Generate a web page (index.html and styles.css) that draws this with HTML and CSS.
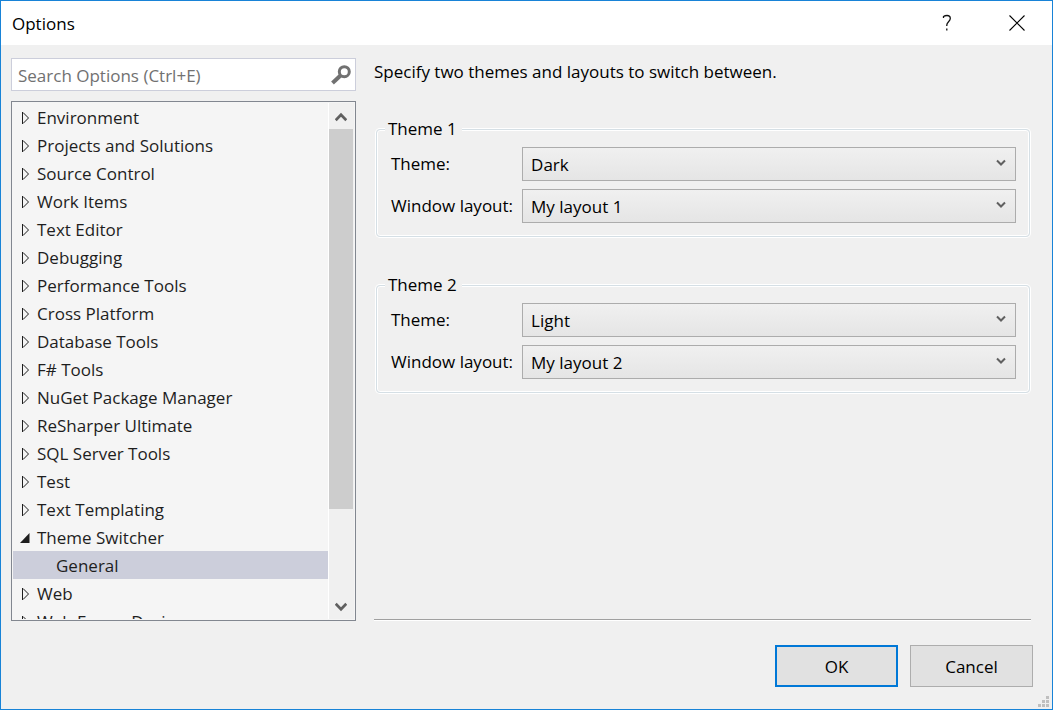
FILE: index.html
```html
<!DOCTYPE html>
<html lang="en">
<head>
<meta charset="utf-8">
<title>Options</title>
<link rel="stylesheet" href="styles.css">
</head>
<body>
<svg class="defs" aria-hidden="true">
  <symbol id="closed" viewBox="0 0 12 14"><path d="M2.5 1v12M3 1.5l5.5 5.5L3 12.500" fill="none" stroke="#1e1e1e"/></symbol>
  <symbol id="open" viewBox="0 0 12 14"><path d="M9.500 2v10H0z" fill="#1e1e1e"/></symbol>
  <symbol id="chevron" viewBox="0 0 10 8"><path d="M1 1.500l4 4 4-4" fill="none" stroke="#606060" stroke-width="2"/></symbol>
</svg>
<div class="dialog" role="dialog" aria-labelledby="title">
  <header class="titlebar">
    <h1 class="title" id="title">Options</h1>
    <button class="caption-button" type="button" aria-label="Help">
      <svg width="10" height="18" viewBox="0 0 10 18"><path d="M1.500 4V2.500Q3 1.500 5 1.500c2 0 3.300 1 3.300 3C8.300 7.500 4.800 8 4.800 11v1M4.800 14.500v2" fill="none" stroke="#111" stroke-width="1.300"/></svg>
    </button>
    <button class="caption-button" type="button" aria-label="Close">
      <svg width="16" height="16" viewBox="0 0 16 16"><path d="M.5.5l15 15M15.500.5l-15 15" fill="none" stroke="#000" stroke-width="1.100"/></svg>
    </button>
  </header>
  <div class="body">
    <nav class="sidebar">
      <div class="search">
        <input class="search-input" type="text" placeholder="Search Options (Ctrl+E)" aria-label="Search Options">
        <button class="search-button" type="button" aria-label="Search">
          <svg width="20" height="20" viewBox="0 0 20 20"><circle cx="13.300" cy="6.700" r="5" fill="none" stroke="#717171" stroke-width="3"/><path d="M9.500 10.500l-8 7.500" stroke="#717171" stroke-width="4"/></svg>
        </button>
      </div>
      <div class="tree">
        <ul class="tree-list">
          <li><button class="node" type="button"><svg class="arrow"><use href="#closed"/></svg>Environment</button></li>
          <li><button class="node" type="button"><svg class="arrow"><use href="#closed"/></svg>Projects and Solutions</button></li>
          <li><button class="node" type="button"><svg class="arrow"><use href="#closed"/></svg>Source Control</button></li>
          <li><button class="node" type="button"><svg class="arrow"><use href="#closed"/></svg>Work Items</button></li>
          <li><button class="node" type="button"><svg class="arrow"><use href="#closed"/></svg>Text Editor</button></li>
          <li><button class="node" type="button"><svg class="arrow"><use href="#closed"/></svg>Debugging</button></li>
          <li><button class="node" type="button"><svg class="arrow"><use href="#closed"/></svg>Performance Tools</button></li>
          <li><button class="node" type="button"><svg class="arrow"><use href="#closed"/></svg>Cross Platform</button></li>
          <li><button class="node" type="button"><svg class="arrow"><use href="#closed"/></svg>Database Tools</button></li>
          <li><button class="node" type="button"><svg class="arrow"><use href="#closed"/></svg>F# Tools</button></li>
          <li><button class="node" type="button"><svg class="arrow"><use href="#closed"/></svg>NuGet Package Manager</button></li>
          <li><button class="node" type="button"><svg class="arrow"><use href="#closed"/></svg>ReSharper Ultimate</button></li>
          <li><button class="node" type="button"><svg class="arrow"><use href="#closed"/></svg>SQL Server Tools</button></li>
          <li><button class="node" type="button"><svg class="arrow"><use href="#closed"/></svg>Test</button></li>
          <li><button class="node" type="button"><svg class="arrow"><use href="#closed"/></svg>Text Templating</button></li>
          <li><button class="node" type="button" aria-expanded="true"><svg class="arrow"><use href="#open"/></svg>Theme Switcher</button>
            <ul class="tree-group">
              <li><button class="node child selected" type="button">General</button></li>
            </ul>
          </li>
          <li><button class="node" type="button"><svg class="arrow"><use href="#closed"/></svg>Web</button></li>
          <li><button class="node" type="button"><svg class="arrow"><use href="#closed"/></svg>Web Forms Designer</button></li>
        </ul>
        <div class="scrollbar">
          <button class="scroll-button" type="button" aria-label="Scroll up"><svg width="12" height="10" viewBox="0 0 12 10"><path d="M.7 8.200L6 2.700l5.300 5.500" fill="none" stroke="#606060" stroke-width="2.700"/></svg></button>
          <div class="track"><div class="thumb"></div></div>
          <button class="scroll-button" type="button" aria-label="Scroll down"><svg width="12" height="10" viewBox="0 0 12 10"><path d="M.7 1.800L6 7.300l5.300-5.500" fill="none" stroke="#606060" stroke-width="2.700"/></svg></button>
        </div>
      </div>
    </nav>
    <main class="page">
      <p class="intro">Specify two themes and layouts to switch between.</p>
      <fieldset class="group">
        <legend class="legend">Theme 1</legend>
        <div class="fields">
          <label for="theme1">Theme:</label>
          <div class="combo"><select class="select" id="theme1"><option>Dark</option><option>Light</option></select><svg class="combo-arrow"><use href="#chevron"/></svg></div>
          <label for="layout1">Window layout:</label>
          <div class="combo"><select class="select" id="layout1"><option>My layout 1</option><option>My layout 2</option></select><svg class="combo-arrow"><use href="#chevron"/></svg></div>
        </div>
      </fieldset>
      <fieldset class="group">
        <legend class="legend">Theme 2</legend>
        <div class="fields">
          <label for="theme2">Theme:</label>
          <div class="combo"><select class="select" id="theme2"><option>Light</option><option>Dark</option></select><svg class="combo-arrow"><use href="#chevron"/></svg></div>
          <label for="layout2">Window layout:</label>
          <div class="combo"><select class="select" id="layout2"><option>My layout 2</option><option>My layout 1</option></select><svg class="combo-arrow"><use href="#chevron"/></svg></div>
        </div>
      </fieldset>
    </main>
  </div>
  <footer class="actions">
    <button class="button default" type="button">OK</button>
    <button class="button" type="button">Cancel</button>
  </footer>
  <svg class="grip" width="12" height="12" viewBox="0 0 12 12" aria-hidden="true"><path d="M8 0h3v3H8zM4 4h3v3H4zM8 4h3v3H8zM0 8h3v3H0zM4 8h3v3H4zM8 8h3v3H8z" fill="#bfbfbf"/></svg>
</div>
</body>
</html>
```
FILE: styles.css
```css
* {
  box-sizing: border-box;
}

body {
  margin: 0;
  background: #f0f0f0;
  color: #000;
  font: 17px/24px "Open Sans", "Noto Sans", sans-serif;
}

button,
input,
select {
  margin: 0;
  padding: 0;
  border: 0;
  background: none;
  color: inherit;
  font: inherit;
}

ul {
  margin: 0;
  padding: 0;
  list-style: none;
}

svg {
  flex: none;
}

.defs {
  position: absolute;
  width: 0;
  height: 0;
}

.dialog {
  position: relative;
  display: flex;
  flex-direction: column;
  height: 100vh;
  border: 1px solid #1883d7;
}

.titlebar {
  display: flex;
  flex: none;
  height: 44px;
  padding-left: 11px;
  background: #fff;
}

.title {
  flex: 1;
  margin: 0;
  font-size: 17px;
  font-weight: 400;
  line-height: 45px;
}

.caption-button {
  display: grid;
  place-items: center;
  width: 70px;
}

.body {
  display: flex;
  flex: 1;
  gap: 18px;
  min-height: 0;
  padding: 13px 21px 0 10px;
}

.sidebar {
  display: flex;
  flex: none;
  flex-direction: column;
  gap: 10px;
  width: 345px;
}

.search {
  display: flex;
  height: 33px;
  border: 1px solid #cccedb;
  background: #fff;
}

.search-input {
  flex: 1;
  min-width: 0;
  padding: 2px 0 0 6px;
}

.search-input::placeholder {
  color: #717171;
  opacity: 1;
}

.search-button {
  display: grid;
  place-items: center;
  width: 28px;
}

.tree {
  display: flex;
  flex: 1;
  min-height: 0;
  padding: 1px;
  border: 1px solid #828790;
  background: #f5f5f5;
}

.tree-list {
  flex: 1;
  overflow: hidden;
  color: #1e1e1e;
}

.node {
  display: flex;
  align-items: center;
  width: 100%;
  height: 28px;
  padding: 2px 0 0 7px;
  text-align: left;
  white-space: nowrap;
}

.child {
  padding-left: 43px;
}

.selected {
  background: #cccedb;
}

.arrow {
  width: 12px;
  height: 14px;
  margin-right: 5px;
}

.scrollbar {
  display: flex;
  flex-direction: column;
  width: 26px;
  padding-right: 1px;
  border-left: 1px solid #fff;
  background: #f0f0f0;
}

.scroll-button {
  display: grid;
  place-items: center;
  height: 26px;
  padding-top: 2px;
}

.track {
  flex: 1;
}

.thumb {
  height: 82%;
  background: #cdcdcd;
}

.page {
  flex: 1;
  min-width: 0;
  margin-bottom: 1px;
  padding-top: 2px;
  border-bottom: 1px solid #a0a0a0;
  box-shadow: 0 1px #fff;
}

.intro {
  margin: 0 0 33px;
}

.group {
  min-width: 0;
  margin: 0 1px 36px 2px;
  padding: 6px 13px 13px 14px;
  border: 1px solid #d5dfe5;
  border-radius: 4px;
  box-shadow: 0 0 0 1px #fff, inset 0 0 0 1px #fff;
}

.legend {
  margin-left: -6px;
  padding: 0 5px 0 3px;
  background: #f0f0f0;
}

.fields {
  display: grid;
  grid-template-columns: auto 1fr;
  gap: 8px 9px;
  align-items: center;
}

.combo {
  position: relative;
}

.select {
  display: block;
  width: 100%;
  height: 34px;
  padding: 2px 0 0 8px;
  border: 1px solid #acacac;
  background: linear-gradient(#f0f0f0, #e5e5e5);
  appearance: none;
}

.combo-arrow {
  position: absolute;
  top: 12px;
  right: 10px;
  width: 10px;
  height: 8px;
  pointer-events: none;
}

.actions {
  display: flex;
  flex: none;
  justify-content: flex-end;
  gap: 12px;
  padding: 24px 19px 22px;
}

.button {
  width: 123px;
  height: 42px;
  padding-top: 2px;
  border: 1px solid #adadad;
  background: #e1e1e1;
}

.default {
  border: 2px solid #0078d7;
}

.grip {
  position: absolute;
  right: 2px;
  bottom: 1px;
}
```
